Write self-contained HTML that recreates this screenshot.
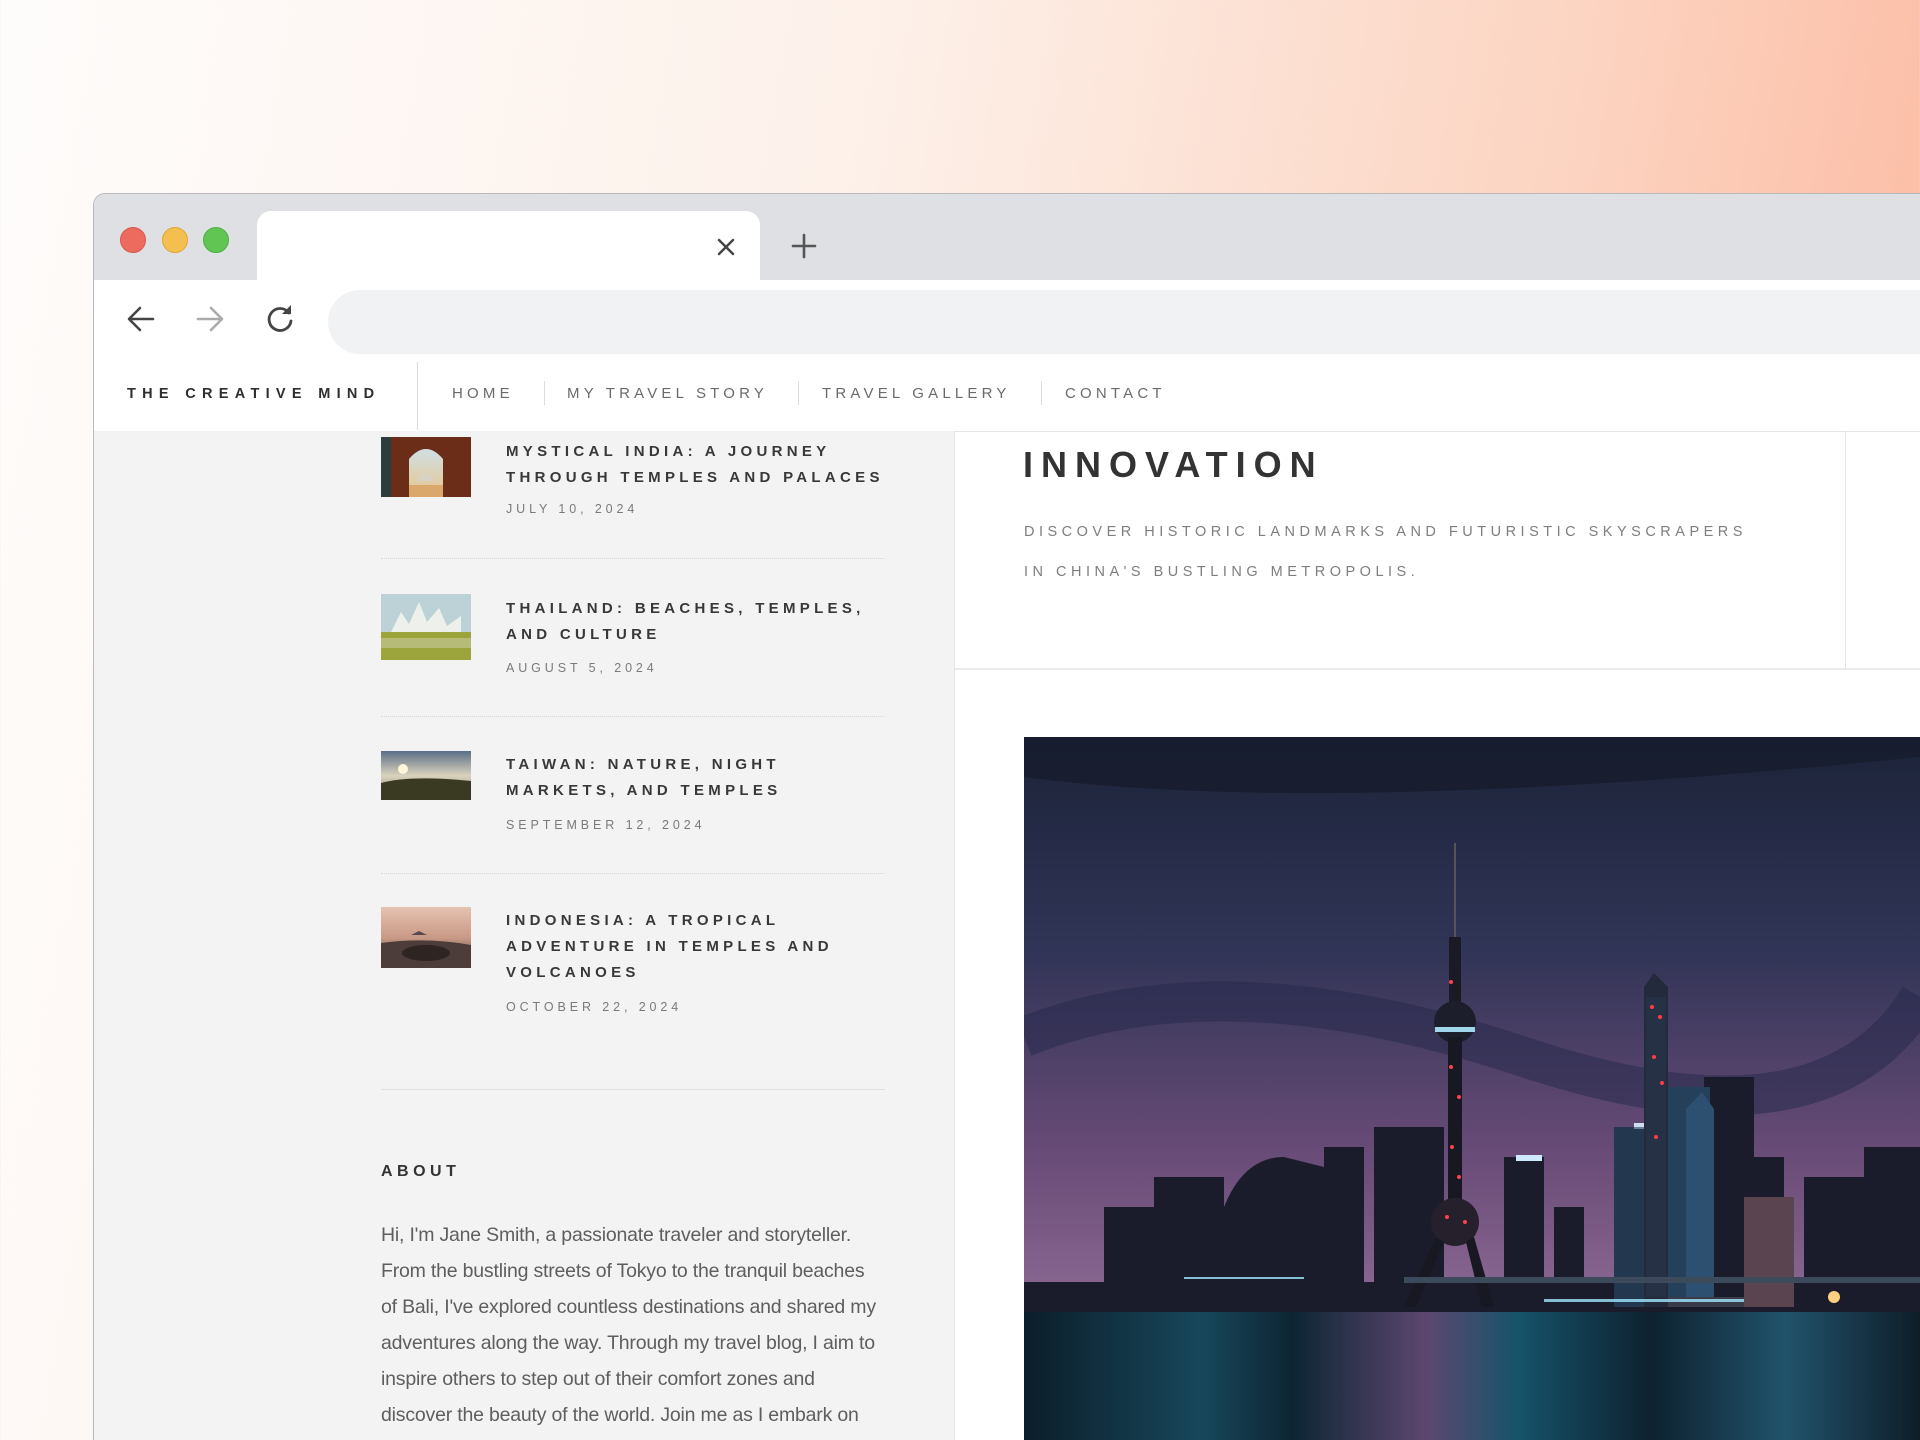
<!DOCTYPE html>
<html><head><meta charset="utf-8">
<style>
*{margin:0;padding:0;box-sizing:border-box}
html,body{width:1920px;height:1440px;overflow:hidden}
body{position:relative;font-family:"Liberation Sans",sans-serif;background:linear-gradient(100deg,#fefcfb 0%,#fdf1ea 40%,#fcd2bf 75%,#fbb297 100%)}
.abs{position:absolute}
.win{left:93px;top:193px;width:1840px;height:1260px;background:#fff;border:1px solid #b9b9bd;border-right:none;border-radius:12px 0 0 0;overflow:hidden}
.tabbar{left:0;top:0;width:100%;height:86px;background:#dfe0e4}
.tab{left:163px;top:17px;width:503px;height:70px;background:#fff;border-radius:14px 14px 0 0}
.dot{width:26px;height:26px;border-radius:50%;top:33px}
.nav a{position:absolute;top:0;font-size:15px;letter-spacing:4.2px;color:#6a6a6a;text-decoration:none;line-height:20px}
.sep{position:absolute;width:1px;background:#ddd}
.t{position:absolute;left:506px;font-size:15px;font-weight:bold;letter-spacing:4.3px;color:#383838;line-height:26px;width:385px}
.d{position:absolute;left:506px;font-size:12.5px;letter-spacing:3.9px;color:#7a7a7a}
.th{position:absolute;left:381px;width:90px}
.hr{position:absolute;left:381px;width:504px;height:1px;border-top:1px dotted #d8d8d8}
</style></head><body>
<div class="abs win">
  <div class="abs tabbar"></div>
  <div class="abs tab"></div>
  <div class="abs dot" style="left:26px;background:#ec6a5e;border:1px solid #d9574c"></div>
  <div class="abs dot" style="left:68px;background:#f5bf4f;border:1px solid #dea73a"></div>
  <div class="abs dot" style="left:109px;background:#61c554;border:1px solid #4fae43"></div>
  <svg class="abs" style="left:621px;top:42px" width="22" height="22" viewBox="0 0 22 22"><path d="M4 4L18 18M18 4L4 18" stroke="#444" stroke-width="2.4" stroke-linecap="round"/></svg>
  <svg class="abs" style="left:696px;top:38px" width="28" height="28" viewBox="0 0 28 28"><path d="M14 3V25M3 14H25" stroke="#555" stroke-width="2.6" stroke-linecap="round"/></svg>
  <svg class="abs" style="left:30px;top:108px" width="34" height="34" viewBox="0 0 34 34"><path d="M29 17H6M16 6L5 17L16 28" fill="none" stroke="#444" stroke-width="2.6" stroke-linecap="round" stroke-linejoin="round"/></svg>
  <svg class="abs" style="left:99px;top:108px" width="34" height="34" viewBox="0 0 34 34"><path d="M5 17H28M18 6L29 17L18 28" fill="none" stroke="#aaa" stroke-width="2.6" stroke-linecap="round" stroke-linejoin="round"/></svg>
  <svg class="abs" style="left:168px;top:107px" width="36" height="36" viewBox="0 0 36 36"><path d="M27 12A11 11 0 1 0 29 20" fill="none" stroke="#444" stroke-width="2.8" stroke-linecap="round"/><path d="M29 4V13H20Z" fill="#444"/></svg>
  <div class="abs" style="left:234px;top:96px;width:1700px;height:64px;background:#f1f2f4;border-radius:32px"></div>
  <div class="abs" style="left:33px;top:192px;font-size:14.5px;font-weight:bold;letter-spacing:6.3px;color:#2e2e2e">THE CREATIVE MIND</div>
  <div class="sep" style="left:323px;top:168px;height:68px"></div>
  <div class="abs nav" style="left:0;top:190px;width:100%;height:24px">
    <a style="left:358px">HOME</a>
    <div class="sep" style="left:450px;top:-3px;height:24px"></div>
    <a style="left:473px">MY TRAVEL STORY</a>
    <div class="sep" style="left:704px;top:-3px;height:24px"></div>
    <a style="left:728px">TRAVEL GALLERY</a>
    <div class="sep" style="left:947px;top:-3px;height:24px"></div>
    <a style="left:971px">CONTACT</a>
  </div>
  <div class="abs" style="left:0;top:237px;width:100%;height:1px;background:#e6e6e6"></div>
</div>
<div class="abs" style="left:94px;top:431px;width:860px;height:1009px;background:#f3f3f3"></div>
<div class="abs" style="left:954px;top:431px;width:1px;height:1009px;background:#e4e4e4"></div>

<svg class="th" style="top:437px" height="60" viewBox="0 0 90 60"><defs><linearGradient id="g1" x1="0" y1="0" x2="0" y2="1"><stop offset="0" stop-color="#cfe0e4"/><stop offset="1" stop-color="#e8c48a"/></linearGradient></defs><rect width="90" height="60" fill="#6b2d18"/><rect x="0" width="10" height="60" fill="#2d3d3e"/><path d="M28 60V22Q45 2 62 22V60Z" fill="url(#g1)"/><path d="M36 44Q45 28 54 44Z" fill="#d8d2c4"/><rect x="28" y="48" width="34" height="12" fill="#d9a86a"/></svg>
<div class="t" style="top:439px">MYSTICAL INDIA: A JOURNEY THROUGH TEMPLES AND PALACES</div>
<div class="d" style="top:502px">JULY 10, 2024</div>
<div class="hr" style="top:558px"></div>

<svg class="th" style="top:594px" height="66" viewBox="0 0 90 66"><rect width="90" height="66" fill="#bcd2d6"/><path d="M10 38L20 18L28 30L38 8L46 28L58 14L66 32L80 22V40H10Z" fill="#eef0ec"/><rect x="0" y="38" width="90" height="28" fill="#9ba53c"/><rect x="0" y="44" width="90" height="10" fill="#c8c9a0" opacity=".6"/></svg>
<div class="t" style="top:596px">THAILAND: BEACHES, TEMPLES, AND CULTURE</div>
<div class="d" style="top:661px">AUGUST 5, 2024</div>
<div class="hr" style="top:716px"></div>

<svg class="th" style="top:751px" height="49" viewBox="0 0 90 49"><defs><linearGradient id="g3" x1="0" y1="0" x2="0" y2="1"><stop offset="0" stop-color="#5a6e86"/><stop offset=".5" stop-color="#d9d2bd"/><stop offset="1" stop-color="#8a8570"/></linearGradient></defs><rect width="90" height="49" fill="url(#g3)"/><circle cx="22" cy="18" r="5" fill="#fff6d8"/><path d="M0 32Q30 24 90 30V49H0Z" fill="#3a3a22"/></svg>
<div class="t" style="top:752px">TAIWAN: NATURE, NIGHT MARKETS, AND TEMPLES</div>
<div class="d" style="top:818px">SEPTEMBER 12, 2024</div>
<div class="hr" style="top:873px"></div>

<svg class="th" style="top:907px" height="61" viewBox="0 0 90 61"><defs><linearGradient id="g4" x1="0" y1="0" x2="0" y2="1"><stop offset="0" stop-color="#e6c2b0"/><stop offset=".5" stop-color="#c99a86"/><stop offset="1" stop-color="#4a3a38"/></linearGradient></defs><rect width="90" height="61" fill="url(#g4)"/><path d="M30 28L38 24L46 28Z" fill="#5a4a50"/><path d="M0 36Q45 30 90 38V61H0Z" fill="#4c3c3a"/><ellipse cx="45" cy="46" rx="24" ry="8" fill="#2e2422"/></svg>
<div class="t" style="top:908px">INDONESIA: A TROPICAL ADVENTURE IN TEMPLES AND VOLCANOES</div>
<div class="d" style="top:1000px">OCTOBER 22, 2024</div>
<div class="hr" style="top:1089px;border-top:1px solid #e0e0e0"></div>

<div class="abs" style="left:381px;top:1163px;font-size:16px;font-weight:bold;letter-spacing:4.5px;color:#333">ABOUT</div>
<div class="abs" style="left:381px;top:1217px;font-size:19.5px;line-height:36px;color:#5e5e5e;white-space:nowrap;letter-spacing:-0.2px">Hi, I'm Jane Smith, a passionate traveler and storyteller.<br>From the bustling streets of Tokyo to the tranquil beaches<br>of Bali, I've explored countless destinations and shared my<br>adventures along the way. Through my travel blog, I aim to<br>inspire others to step out of their comfort zones and<br>discover the beauty of the world. Join me as I embark on</div>

<div class="abs" style="left:1845px;top:431px;width:1px;height:238px;background:#e4e4e4"></div>
<div class="abs" style="left:955px;top:668px;width:965px;height:2px;background:#ebebeb"></div>
<div class="abs" style="left:1023px;top:444px;font-size:36px;font-weight:bold;letter-spacing:8px;color:#333">INNOVATION</div>
<div class="abs" style="left:1024px;top:512px;font-size:14.5px;letter-spacing:4.5px;line-height:40px;color:#7e7e7e">DISCOVER HISTORIC LANDMARKS AND FUTURISTIC SKYSCRAPERS<br>IN CHINA'S BUSTLING METROPOLIS.</div>

<svg class="abs" style="left:1024px;top:737px" width="896" height="703" viewBox="0 0 896 703">
<defs>
<linearGradient id="sky" x1="0" y1="0" x2="0" y2="1"><stop offset="0" stop-color="#1b2338"/><stop offset=".3" stop-color="#303456"/><stop offset=".6" stop-color="#6a4c78"/><stop offset=".8" stop-color="#8a6892"/></linearGradient>
<linearGradient id="wat" x1="0" y1="0" x2="1" y2="0"><stop offset="0" stop-color="#0d2330"/><stop offset=".2" stop-color="#1d5a72"/><stop offset=".3" stop-color="#0f2d3d"/><stop offset=".45" stop-color="#7a5a8e"/><stop offset=".55" stop-color="#1b6a86"/><stop offset=".7" stop-color="#102838"/><stop offset=".85" stop-color="#2a6a88"/><stop offset="1" stop-color="#10222e"/></linearGradient>
</defs>
<rect width="896" height="703" fill="url(#sky)"/>
<path d="M0 40Q300 80 896 20V0H0Z" fill="#151b2b" opacity=".7"/>
<path d="M0 300Q200 220 500 320T896 260" stroke="#24284a" stroke-width="40" fill="none" opacity=".5"/>
<g fill="#1a1c2c">
<rect x="80" y="470" width="60" height="100"/>
<rect x="130" y="440" width="70" height="130"/>
<path d="M200 470Q220 420 260 420L300 430V570H200Z"/>
<rect x="300" y="410" width="40" height="160"/>
<rect x="350" y="390" width="70" height="180"/>
<rect x="480" y="420" width="40" height="150"/>
<rect x="530" y="470" width="30" height="100"/>
<rect x="590" y="390" width="40" height="180"/>
<rect x="680" y="340" width="50" height="230"/>
<rect x="660" y="560" width="236" height="20"/>
<rect x="720" y="420" width="40" height="150"/>
<rect x="780" y="440" width="60" height="130"/>
<rect x="840" y="410" width="56" height="160"/>
<rect x="0" y="545" width="896" height="30"/>
</g>
<rect x="492" y="418" width="26" height="6" fill="#cfeaff"/>
<rect x="610" y="386" width="30" height="6" fill="#d8f0ff" opacity=".9"/>
<rect x="590" y="390" width="38" height="180" fill="#2a4a66" opacity=".6"/>
<rect x="640" y="350" width="46" height="220" fill="#24405a"/>
<path d="M662 372L678 355L690 372V570H662Z" fill="#2e5070"/>
<rect x="620" y="560" width="120" height="10" fill="#3a3a48"/>
<rect x="720" y="460" width="50" height="110" fill="#5a4450"/>
<path d="M620 250L630 236L644 250V570H620Z" fill="#232a3c"/>
<rect x="622" y="260" width="20" height="300" fill="#2a3448" opacity=".7"/>
<g fill="#ff3b4a"><circle cx="628" cy="270" r="2"/><circle cx="636" cy="280" r="2"/><circle cx="630" cy="320" r="2"/><circle cx="638" cy="346" r="2"/><circle cx="632" cy="400" r="2"/></g>
<rect x="430" y="106" width="2" height="110" fill="#555"/>
<rect x="425" y="200" width="12" height="80" fill="#1a1a24"/>
<circle cx="431" cy="285" r="21" fill="#1c1e2c"/><rect x="411" y="290" width="40" height="5" fill="#9fd6ea"/>
<rect x="424" y="300" width="14" height="180" fill="#171822"/>
<circle cx="431" cy="485" r="24" fill="#26202c"/>
<path d="M412 500L380 570H392L420 505ZM450 500L470 570H458L442 505Z" fill="#171822"/>
<g fill="#ff4050"><circle cx="427" cy="245" r="2"/><circle cx="427" cy="330" r="2"/><circle cx="435" cy="360" r="2"/><circle cx="428" cy="410" r="2"/><circle cx="435" cy="440" r="2"/><circle cx="423" cy="480" r="2"/><circle cx="441" cy="485" r="2"/></g>
<rect x="380" y="540" width="516" height="6" fill="#3d4a5c"/>
<g fill="#9fe8ff" opacity=".8"><rect x="520" y="562" width="200" height="3"/><rect x="160" y="540" width="120" height="2"/></g>
<circle cx="810" cy="560" r="6" fill="#ffcf80"/>
<rect x="0" y="575" width="896" height="128" fill="url(#wat)"/>
<rect x="0" y="575" width="896" height="128" fill="#061018" opacity=".25"/>
</svg>
</body></html>
